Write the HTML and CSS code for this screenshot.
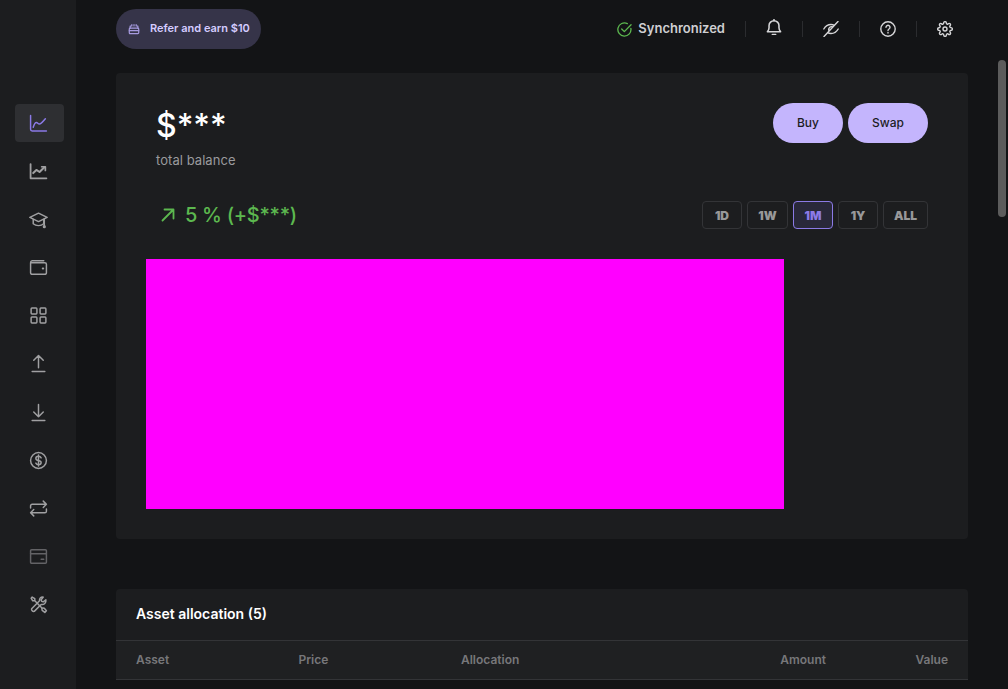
FILE: index.html
```html
<!DOCTYPE html>
<html lang="en">
<head>
    <meta charset="UTF-8">
    <meta name="viewport" content="width=device-width, initial-scale=1.0">
    <title>Portfolio</title>
    <link rel="stylesheet" href="styles.css">
</head>
<body>
<div class="app">
    <nav class="sidebar">
        <a class="nav-item active">
            <svg viewBox="0 0 18 18"><path d="M1.500 1.500v13a1.500 1.500 0 0 0 1.500 1.500h13.500"/><path d="M4 12.500c.8-2.500 1.800-4.500 3-4.500s1.500 1.500 2.800 1.500S13 7.500 15.500 4.500"/></svg>
        </a>
        <a class="nav-item">
            <svg viewBox="0 0 18 18"><path d="M1.500 2v13.500h15" stroke-width="1.700"/><path d="M4 10.500l3-3 3 2 4.500-4.500" stroke-width="1.900"/><path d="M12 4.500h3.500V8" stroke-width="1.600"/></svg>
        </a>
        <a class="nav-item">
            <svg viewBox="0 0 18 18"><path d="M9 3L.8 7 9 11l8.200-4z"/><path d="M4 9v4c1.500 1.300 3.200 1.800 5 1.800s3.500-.5 5-1.800V9"/><path d="M14.500 8.500v6.500"/><circle cx="14.500" cy="15.800" r=".8"/></svg>
        </a>
        <a class="nav-item">
            <svg viewBox="0 0 18 18"><path d="M14 2.500H3A2 2 0 0 0 1.500 4.500v9.500A1.500 1.500 0 0 0 3 15.500h12a1.500 1.500 0 0 0 1.500-1.500V6A1.500 1.500 0 0 0 15 4.500H2"/><path d="M13 10h.5" stroke-width="1.800"/></svg>
        </a>
        <a class="nav-item">
            <svg viewBox="0 0 18 18"><rect x="2" y="2" width="5.500" height="5.500" rx=".8"/><rect x="10.500" y="2" width="5.500" height="5.500" rx=".8"/><rect x="2" y="10.500" width="5.500" height="5.500" rx=".8"/><rect x="10.500" y="10.500" width="5.500" height="5.500" rx=".8"/></svg>
        </a>
        <a class="nav-item">
            <svg viewBox="0 0 18 18"><path d="M9 13V1.500M4.500 6L9 1.500 13.500 6M3 16.500h12"/></svg>
        </a>
        <a class="nav-item">
            <svg viewBox="0 0 18 18"><path d="M9 1.500V13M4.500 8.500L9 13l4.500-4.500M3 16.500h12"/></svg>
        </a>
        <a class="nav-item">
            <svg viewBox="0 0 18 18"><circle cx="9" cy="9" r="7.500"/><path d="M11.500 6.500C11 5.500 10 5 9 5c-1.400 0-2.500.8-2.500 2s1.100 1.700 2.500 2 2.500.8 2.500 2-1.100 2-2.500 2c-1 0-2-.5-2.500-1.500M9 3.800v10.400"/></svg>
        </a>
        <a class="nav-item">
            <svg viewBox="0 0 18 18"><path d="M1.500 8.500V6.500A1.500 1.500 0 0 1 3 5h13M13.500 2L16.500 5 13.500 8"/><path d="M16.500 9.500v2A1.500 1.500 0 0 1 15 13H2M4.500 16L1.500 13 4.500 10"/></svg>
        </a>
        <a class="nav-item dim">
            <svg viewBox="0 0 18 18"><rect x="1.500" y="2.500" width="15" height="13" rx="1"/><path d="M1.500 6.500h15M11.500 11.500h2.500"/></svg>
        </a>
        <a class="nav-item">
            <svg viewBox="0 0 18 18"><path d="M3 2l2.500 1.500v2l6.500 6.500 2.500.5 2 2.500-1.500 1.500-2.500-2-.5-2.500L5.500 5.500h-2L2 3z"/><path d="M16 4.500l-2.500 2-1.500-.5-.5-1.500 2-2.500C11.500 1.500 9.500 3 10 5.500L2.500 13a2 2 0 0 0 2.500 2.500L11.500 9c2.800.5 5-1.500 4.500-4.500z"/></svg>
        </a>
    </nav>

    <div class="main">
        <header class="topbar">
            <a class="refer-pill">
                <svg viewBox="0 0 14 14"><path d="M2.500 6V3.500h2V2M11.500 6V3.500h-2V2M7 2v1.500"/><rect x="1.500" y="6" width="11" height="6.500" rx="1"/><path d="M1.500 9h11"/></svg>
                <span class="lift">Refer and earn $10</span>
            </a>
            <div class="status-bar">
                <span class="sync">
                    <svg viewBox="0 0 16 16"><path d="M14.800 6.800A7 7 0 1 1 11 1.700"/><path d="M5 7.500l2.800 2.800L15 3"/></svg>
                    <span class="lift">Synchronized</span>
                </span>
                <a class="top-icon bell">
                    <svg viewBox="1 0.500 14 14.500"><path d="M2 12h12c-1-1-1.500-2-1.500-3.500V6.500a4.500 4.500 0 0 0-9 0v2C3.500 10 3 11 2 12z"/><path d="M6.500 14.500h3M8 2V1"/></svg>
                </a>
                <a class="top-icon">
                    <svg viewBox="0 0 16 16"><path d="M.8 8C2.500 5 5 3.500 8 3.500c1.200 0 2.300.2 3.300.8M15.200 8c-1.700 3-4.200 4.500-7.200 4.500-1.200 0-2.300-.2-3.300-.8"/><path d="M6 10a3 3 0 0 1 4-4M1 15.500L15 .5"/></svg>
                </a>
                <a class="top-icon">
                    <svg viewBox="0 0 16 16"><circle cx="8" cy="8" r="7.200"/><path d="M6 6.200a2 2 0 1 1 3 1.800c-.7.400-1 .8-1 1.500M8 11.500v.6"/></svg>
                </a>
                <a class="top-icon">
                    <svg class="gear" viewBox="0 0 24 24"><circle cx="12" cy="12" r="3"/><path d="M19.400 15a1.650 1.650 0 0 0 .33 1.820l.06.06a2 2 0 0 1 0 2.830 2 2 0 0 1-2.830 0l-.06-.06a1.650 1.650 0 0 0-1.820-.33 1.650 1.650 0 0 0-1 1.510V21a2 2 0 0 1-2 2 2 2 0 0 1-2-2v-.09A1.650 1.650 0 0 0 9 19.400a1.650 1.650 0 0 0-1.820.33l-.06.06a2 2 0 0 1-2.830 0 2 2 0 0 1 0-2.830l.06-.06a1.650 1.650 0 0 0 .33-1.820 1.650 1.650 0 0 0-1.510-1H3a2 2 0 0 1-2-2 2 2 0 0 1 2-2h.09A1.650 1.650 0 0 0 4.600 9a1.650 1.650 0 0 0-.33-1.820l-.06-.06a2 2 0 0 1 0-2.830 2 2 0 0 1 2.830 0l.06.06a1.650 1.650 0 0 0 1.820.33H9a1.650 1.650 0 0 0 1-1.510V3a2 2 0 0 1 2-2 2 2 0 0 1 2 2v.09a1.650 1.650 0 0 0 1 1.510 1.650 1.650 0 0 0 1.820-.33l.06-.06a2 2 0 0 1 2.830 0 2 2 0 0 1 0 2.830l-.06.06a1.650 1.650 0 0 0-.33 1.820V9a1.650 1.650 0 0 0 1.510 1H21a2 2 0 0 1 2 2 2 2 0 0 1-2 2h-.09a1.650 1.650 0 0 0-1.510 1z"/></svg>
                </a>
            </div>
        </header>

        <section class="card balance-card">
            <div class="balance-head">
                <div>
                    <div class="balance-value">$***</div>
                    <div class="balance-label">total balance</div>
                </div>
                <div class="actions">
                    <button class="btn-pill buy">Buy</button>
                    <button class="btn-pill swap">Swap</button>
                </div>
            </div>
            <div class="change-row">
                <div class="change">
                    <svg viewBox="0 0 14 14"><path d="M1.500 12.500L12.500 1.500M3.500 1.500h9v9"/></svg>
                    <span>5 % (+$***)</span>
                </div>
                <div class="ranges">
                    <button class="range">1D</button>
                    <button class="range wide">1W</button>
                    <button class="range selected">1M</button>
                    <button class="range">1Y</button>
                    <button class="range all">ALL</button>
                </div>
            </div>
            <div class="chart"></div>
        </section>

        <section class="card assets-card">
            <h2><span class="lift">Asset allocation (5)</span></h2>
            <div class="table-head">
                <span class="col">Asset</span>
                <span class="col">Price</span>
                <span class="col">Allocation</span>
                <span class="col right">Amount</span>
                <span class="col right">Value</span>
            </div>
        </section>
    </div>

    <div class="scroll-thumb"></div>
</div>
</body>
</html>
```

FILE: styles.css
```css
:root {
    --background-color: #131416;
    --card-color: #1c1d1f;
    --text-color: #ffffff;
    --muted-color: #9a9a9d;
    --icon-color: #a0a0a2;
    --primary-color: #c4b5fd;
    --accent-color: #8b7ae6;
    --green-color: #5cb84f;
    --border-color: #333437;
}
* {
    box-sizing: border-box;
}
html, body {
    margin: 0;
    height: 100%;
    overflow: hidden;
}
body {
    font-family: Inter, 'Liberation Sans', sans-serif;
    background-color: var(--background-color);
    color: var(--text-color);
}
svg {
    fill: none;
    stroke: currentColor;
    stroke-width: 1.4;
    stroke-linecap: round;
    stroke-linejoin: round;
}
.lift {
    padding-bottom: 2px;
}
.app {
    display: flex;
    height: 689px;
    overflow: hidden;
    position: relative;
}

/* sidebar */
.sidebar {
    width: 76px;
    flex-shrink: 0;
    background-color: var(--card-color);
    padding: 104px 12px 0 15px;
    display: flex;
    flex-direction: column;
    gap: 10.2px;
}
.nav-item {
    width: 49px;
    height: 38px;
    padding-right: 3px;
    border-radius: 4px;
    display: flex;
    align-items: center;
    justify-content: center;
    color: var(--icon-color);
}
.nav-item svg {
    width: 19px;
    height: 19px;
}
.nav-item.active {
    background-color: #2e2f32;
    color: var(--accent-color);
}
.nav-item.dim {
    color: #636366;
}

/* top bar */
.main {
    flex: 1;
    min-width: 0;
    padding: 9px 40px 0;
}
.topbar {
    display: flex;
    align-items: center;
    justify-content: space-between;
    height: 40px;
    margin-bottom: 24px;
}
.refer-pill {
    width: 145px;
    height: 40px;
    border-radius: 20px;
    background-color: #363449;
    color: #d5ccff;
    font-size: 11px;
    font-weight: 600;
    display: flex;
    align-items: center;
    gap: 10px;
    padding-left: 12px;
    white-space: nowrap;
}
.refer-pill svg {
    width: 12px;
    height: 12px;
    color: #a79be0;
}
.status-bar {
    display: flex;
    align-items: center;
    margin-right: -4px;
}
.sync {
    display: flex;
    align-items: center;
    gap: 6px;
    font-size: 13px;
    font-weight: 600;
    color: #cfcfd2;
    padding-right: 20px;
}
.sync svg {
    width: 15px;
    height: 15px;
    color: var(--green-color);
}
.top-icon {
    width: 57px;
    height: 16px;
    display: flex;
    align-items: center;
    justify-content: center;
    border-left: 1px solid #2b2c2f;
    color: #d6d6d8;
}
.top-icon:last-child {
    width: 56px;
}
.top-icon svg {
    width: 16px;
    height: 16px;
    flex-shrink: 0;
}
.top-icon .gear {
    stroke-width: 2.1;
}
.bell svg {
    margin-top: -4px;
}

/* cards */
.card {
    background-color: var(--card-color);
    border-radius: 4px;
}
.balance-card {
    height: 466px;
    padding: 30px;
    margin-bottom: 50px;
}
.balance-head {
    display: flex;
    justify-content: space-between;
    padding: 0 10px;
    height: 65px;
}
.balance-value {
    font-size: 32px;
    font-weight: 500;
    line-height: 40px;
    padding-top: 3px;
    height: 43px;
}
.balance-label {
    font-size: 13px;
    line-height: 16px;
    margin-top: 6px;
    letter-spacing: 0.05px;
    color: var(--muted-color);
}
.actions {
    display: flex;
    gap: 5px;
    height: 40px;
}
.btn-pill {
    height: 40px;
    padding: 0 0 2px;
    border: 0;
    border-radius: 20px;
    background-color: var(--primary-color);
    color: #1c1d1f;
    font-family: inherit;
    font-size: 12px;
    font-weight: 500;
}
.buy { width: 70px; }
.swap { width: 80px; }

.change-row {
    display: flex;
    align-items: center;
    justify-content: space-between;
    padding: 0 10px;
    margin-top: 33px;
    height: 28px;
    margin-bottom: 30px;
}
.change {
    display: flex;
    align-items: center;
    gap: 10px;
    padding-left: 5px;
    color: var(--green-color);
    font-size: 20px;
    font-weight: 500;
    letter-spacing: -0.3px;
}
.change svg {
    width: 14px;
    height: 14px;
    stroke-width: 1.8;
}
.ranges {
    display: flex;
    gap: 5px;
}
.range {
    width: 40px;
    height: 28px;
    padding: 0;
    border: 1px solid var(--border-color);
    border-radius: 4px;
    background: transparent;
    color: #989899;
    font-family: inherit;
    font-size: 12px;
    font-weight: 900;
}
.range.wide { width: 41px; }
.range.all { width: 45px; }
.range.selected {
    border-color: var(--accent-color);
    background-color: #29283a;
    color: var(--accent-color);
}
.chart {
    width: 638px;
    height: 250px;
    background-color: #ff00ff;
}

/* asset table */
.assets-card h2 {
    margin: 0;
    height: 52px;
    padding-left: 20px;
    display: flex;
    align-items: center;
    font-size: 14px;
    font-weight: 600;
    border-bottom: 1px solid var(--border-color);
}
.table-head {
    display: grid;
    grid-template-columns: 162.5px 162.5px 1fr 120px 122px;
    align-items: center;
    height: 39px;
    padding: 0 20px 2px;
    background-color: #1f2022;
    border-bottom: 1px solid var(--border-color);
    font-size: 12px;
    font-weight: 600;
    color: #77777a;
}
.col.right {
    text-align: right;
}

/* overlay scrollbar */
.scroll-thumb {
    position: absolute;
    top: 60px;
    right: 2px;
    width: 8px;
    height: 157px;
    border-radius: 4px;
    background-color: #5c5c5c;
}
```
